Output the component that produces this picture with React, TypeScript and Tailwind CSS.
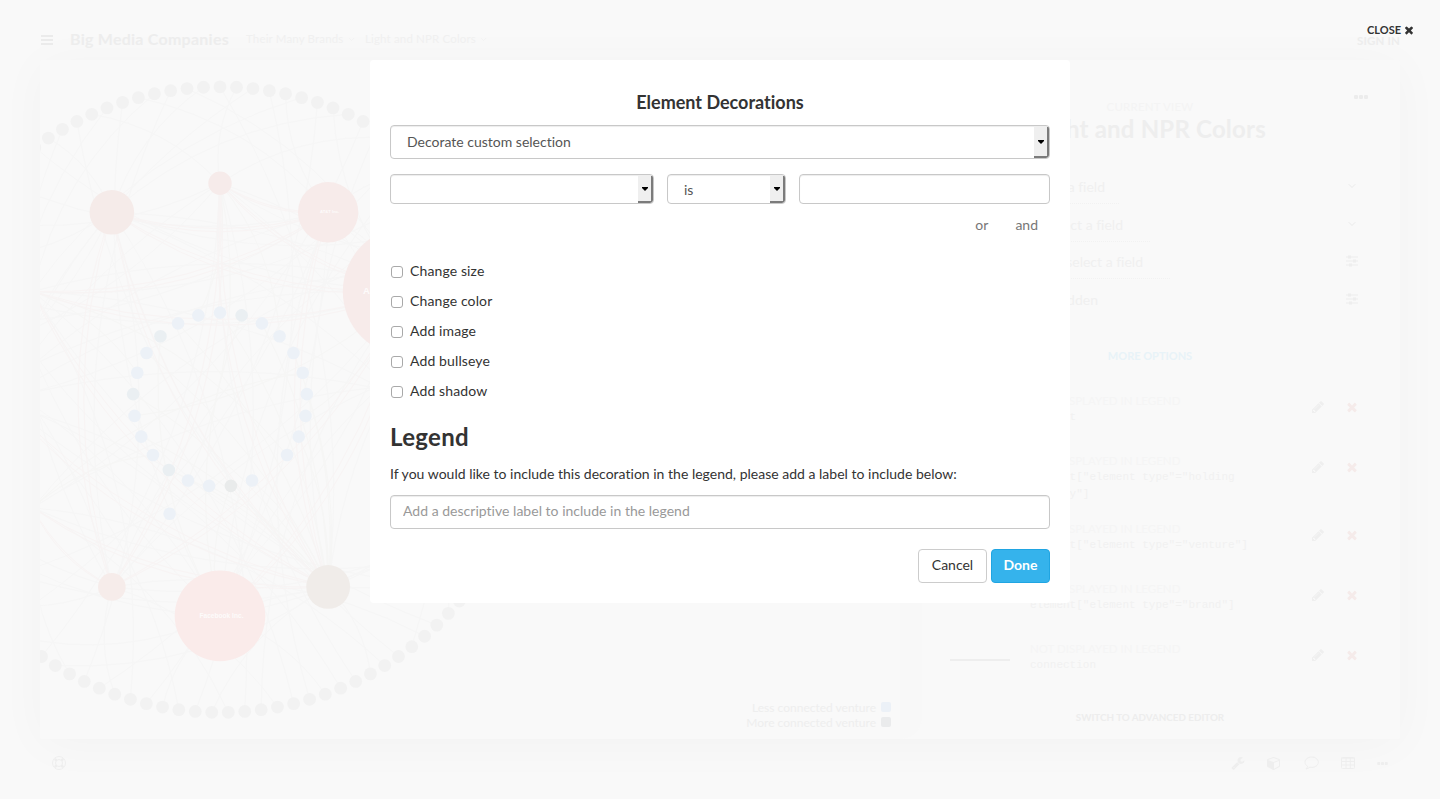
import React from "react";
import { ChevronDown } from "lucide-react";

const CX = 180;
const CY = 339.6;

type Point = { x: number; y: number };

function onRing(radius: number, index: number, count: number): Point {
  const a = (index / count) * Math.PI * 2;
  return { x: CX + radius * Math.sin(a), y: CY - radius * Math.cos(a) };
}

const outerDots = Array.from({ length: 119 }, (_, i) => onRing(312.8, i, 119));
const innerDots = Array.from({ length: 25 }, (_, i) => ({ ...onRing(87, i, 25), i })).filter((d) => d.i !== 10);

const hubs = [
  { k: 0, r: 11.7, fill: "#f6ebea" },
  { k: 1, r: 30.2, fill: "#f7ebea" },
  { k: 2, r: 64.5, fill: "#f7ebea" },
  { k: 5, r: 21.9, fill: "#f0ece9" },
  { k: 6, r: 45.3, fill: "#faebea" },
  { k: 7, r: 13.8, fill: "#f6ecea" },
  { k: 8, r: 7, fill: "#f7ebea" },
  { k: 9, r: 7, fill: "#f7ebea" },
  { k: 10, r: 7, fill: "#f7ebea" },
  { k: 11, r: 22.3, fill: "#f5ebe9" },
].map((h) => ({ ...h, ...onRing(216.3, h.k, 12) }));

function curve(a: Point, b: Point, bend: number) {
  const mx = (a.x + b.x) / 2 - (b.y - a.y) * bend;
  const my = (a.y + b.y) / 2 + (b.x - a.x) * bend;
  return `M${a.x.toFixed(1)} ${a.y.toFixed(1)}Q${mx.toFixed(1)} ${my.toFixed(1)} ${b.x.toFixed(1)} ${b.y.toFixed(1)}`;
}

const grayLinks = outerDots.map((d, i) => curve(d, hubs[(i * 7 + 3) % hubs.length], i % 3 === 0 ? -0.17 : 0.17));
const innerLinks = innerDots.flatMap((d, i) =>
  i % 2 ? [curve(d, hubs[(i * 3 + 1) % hubs.length], 0.16)] : [curve(d, hubs[3], -0.12)],
);
const pinkLinks = [
  [9, 1], [9, 2], [9, 3], [9, 5], [0, 2], [0, 1], [0, 3], [8, 1], [8, 2], [8, 3],
  [6, 3], [6, 5], [5, 2], [5, 0], [7, 3], [4, 2], [1, 3],
].flatMap(([a, b]) => [curve(hubs[a], hubs[b], 0.15), curve(hubs[a], hubs[b], 0.18)]);

function innerFill(i: number) {
  if (i === 12) return "#e9ebeb";
  return [1, 15, 19, 22].includes(i) ? "#eaeff2" : "#ecf1f7";
}

function Network() {
  return (
    <svg className="block h-[680px] w-[860px]" viewBox="0 0 860 680">
      <g fill="none" strokeWidth="1">
        {grayLinks.map((d, i) => <path key={i} d={d} stroke="#f6f6f6" />)}
        {innerLinks.map((d, i) => <path key={i} d={d} stroke="#f6f6f5" />)}
        {pinkLinks.map((d, i) => <path key={i} d={d} stroke="#f8f4f4" />)}
      </g>
      {outerDots.map((d, i) => <circle key={i} cx={d.x} cy={d.y} r="6.4" fill="#f2f2f2" />)}
      {innerDots.map((d) => <circle key={d.i} cx={d.x} cy={d.y} r="6.3" fill={innerFill(d.i)} />)}
      <circle cx="129.6" cy="453.7" r="6.3" fill="#ecf1f7" />
      {hubs.map((h) => <circle key={h.k} cx={h.x} cy={h.y} r={h.r} fill={h.fill} />)}
      <g fill="#fdfbfb" fontFamily="Liberation Sans, sans-serif" fontWeight="700">
        <text x="280" y="153" fontSize="4.2">AT&amp;T Inc.</text>
        <text x="159.5" y="558" fontSize="6.6">Facebook Inc.</text>
        <text x="323" y="234" fontSize="9.5">Al</text>
      </g>
    </svg>
  );
}

function Glyph({ d, className }: { d: string; className: string }) {
  return (
    <svg viewBox="0 0 1792 1792" fill="currentColor" className={className}>
      <path d={d} />
    </svg>
  );
}

const TIMES = "M1490 1322q0 40-28 68l-136 136q-28 28-68 28t-68-28l-294-294-294 294q-28 28-68 28t-68-28l-136-136q-28-28-28-68t28-68l294-294-294-294q-28-28-28-68t28-68l136-136q28-28 68-28t68 28l294 294 294-294q28-28 68-28t68 28l136 136q28 28 28 68t-28 68l-294 294 294 294q28 28 28 68z";
const PENCIL = "M491 1536l91-91-235-235-91 91v107h128v128h107zm523-928q0-22-22-22-10 0-17 7l-542 542q-7 7-7 17 0 22 22 22 10 0 17-7l542-542q7-7 7-17zm-54-192l416 416-832 832h-416v-416zm683 96q0 53-37 90l-166 166-416-416 166-165q36-38 90-38 53 0 91 38l235 234q37 39 37 91z";
const WRENCH = "M448 1472q0-26-19-45t-45-19-45 19-19 45 19 45 45 19 45-19 19-45zm644-420l-682 682q-37 37-90 37-52 0-91-37l-106-108q-38-36-38-90 0-53 38-91l681-681q39 98 114.5 173.5t173.5 114.5zm634-435q0 39-23 106-47 134-164.5 217.5t-258.5 83.5q-185 0-316.5-131.5t-131.5-316.5 131.5-316.5 316.5-131.5q58 0 121.5 16.5t107.5 46.5q16 11 16 28t-16 28l-293 169v224l193 107q5-3 79-48.5t135.5-81 70.5-35.5q15 0 23.5 10t8.5 25z";
const CUBE = "M896 1629l640-349v-636l-640 233v752zm-64-865l698-254-698-254-698 254zm832-252v768q0 35-18 65t-49 47l-704 384q-28 16-61 16t-61-16l-704-384q-31-17-49-47t-18-65v-768q0-40 23-73t61-47l704-256q22-8 44-8t44 8l704 256q38 14 61 47t23 73z";

function Dots({ className }: { className: string }) {
  return (
    <svg viewBox="0 0 14 4" fill="currentColor" className={className}>
      <rect width="4" height="4" rx="1" />
      <rect x="5" width="4" height="4" rx="1" />
      <rect x="10" width="4" height="4" rx="1" />
    </svg>
  );
}

function Sliders() {
  return (
    <svg viewBox="0 0 12 12" className="h-3 w-3" fill="#eeeeee">
      <path d="M0 1.5h12v1H0zM0 5.5h12v1H0zM0 9.5h12v1H0zM2 .5h3v3H2zM7 4.5h3v3H7zM3 8.5h3v3H3z" />
    </svg>
  );
}

function LifeRing() {
  return (
    <svg viewBox="0 0 14 14" className="h-[14px] w-[14px]" fill="none" stroke="currentColor">
      <circle cx="7" cy="7" r="6.5" />
      <circle cx="7" cy="7" r="3.5" />
      <path d="M2.8 2.8l1.6 1.6M9.6 9.6l1.6 1.6M11.2 2.8L9.6 4.4M4.4 9.6l-1.6 1.6" strokeWidth="2.6" />
    </svg>
  );
}

function Bubble() {
  return (
    <svg viewBox="0 0 15 14" className="ml-[23px] h-[14px] w-[15px]" fill="none" stroke="currentColor">
      <path d="M7.7 1C4 1 1 3.300 1 6.200c0 1.700 1 3.200 2.600 4.100-.2 1-.8 1.900-1.600 2.700 1.700-.3 2.900-1 3.800-1.800.6.1 1.200.2 1.900.2 3.700 0 6.600-2.300 6.600-5.200S11.400 1 7.700 1z" />
    </svg>
  );
}

function TableIcon() {
  return (
    <svg viewBox="0 0 14 12" className="ml-[22px] h-3 w-[14px]" fill="none" stroke="currentColor">
      <rect x=".5" y=".5" width="13" height="11" rx="1" />
      <path d="M0 1.200h14M0 4.500h14M0 8h14M5 1v11M9.300 1v11" />
    </svg>
  );
}

function FieldRow({ text, end, line, icon }: { text: string; end: string; line: string; icon: React.ReactNode }) {
  return (
    <div className="flex h-[37.5px] items-start justify-between">
      <div className={`flex h-[28px] justify-end ${line}`}>
        <span className={`pt-[2px] text-[14px] leading-[18px] text-[#f0f0f0] ${end}`}>{text}</span>
      </div>
      <div className="mr-[42px] flex h-5 w-3 items-center justify-center text-[#ebebeb]">{icon}</div>
    </div>
  );
}

function RuleRow({ height, swatch, lines }: { height: string; swatch?: React.ReactNode; lines: string[] }) {
  return (
    <div className={`flex items-start ${height}`}>
      <div className="ml-[28px] flex h-[26px] w-[80px] items-center">{swatch}</div>
      <div className="flex-1">
        <p className="mb-px text-[11.5px] leading-[15px] text-[#f5f5f5]">NOT DISPLAYED IN LEGEND</p>
        {lines.map((l) => (
          <p key={l} className="font-[Liberation_Mono,monospace] text-[11px] leading-[17px] text-[#f1f1f1]">{l}</p>
        ))}
      </div>
      <Glyph d={PENCIL} className="mt-[7px] mr-[20px] h-[14px] w-[14px] text-[#efefef]" />
      <Glyph d={TIMES} className="mt-[7px] mr-[41px] h-[14px] w-[14px] text-[#f5ebea]" />
    </div>
  );
}

function SelectBox({ className, textClass, value }: { className: string; textClass: string; value: string }) {
  return (
    <div className={`flex overflow-hidden rounded-[4px] border border-[#c8c8c8] bg-white shadow-[inset_0_1px_1px_rgba(0,0,0,0.075)] ${className}`}>
      <span className={`flex-1 text-[14px] text-[#555555] ${textClass}`}>{value}</span>
      <span className="mt-px flex w-[15px] items-center justify-center rounded-br-[3px] border-r-2 border-b-2 border-[#7b7b7b] bg-[#efefef] pl-px">
        <svg viewBox="0 0 6 4" className="h-1 w-[6px] shrink-0"><path d="M0 0h6v1L3 4 0 1z" fill="#000" /></svg>
      </span>
    </div>
  );
}

const options = ["Change size", "Change color", "Add image", "Add bullseye", "Add shadow"];

function Modal() {
  return (
    <div className="flex h-[543px] w-[700px] flex-col rounded-[4px] bg-white px-5 text-[14px] text-[#333333]">
      <h4 className="mt-8 text-center text-[18px] leading-5 font-bold">Element Decorations</h4>
      <SelectBox className="mt-[13px] h-[34px]" textClass="pl-4 leading-[31px]" value="Decorate custom selection" />
      <div className="mt-[15px] flex h-[30px]">
        <SelectBox className="w-[264px]" textClass="" value="" />
        <SelectBox className="ml-[13px] w-[119px]" textClass="pl-4 leading-[30px]" value="is" />
        <input className="ml-[13px] w-[251px] rounded-[4px] border border-[#c8c8c8] shadow-[inset_0_1px_1px_rgba(0,0,0,0.075)]" />
      </div>
      <div className="mt-[11px] flex h-5 justify-end gap-[27px] pr-3 leading-5 text-[#777777]">
        <span>or</span>
        <span>and</span>
      </div>
      <div className="mt-[26px] flex flex-col gap-[10px] tracking-[0.12px]">
        {options.map((o) => (
          <label key={o} className="flex h-5 items-center pl-px leading-5">
            <input type="checkbox" className="mt-[1px] mr-[7px] h-3 w-3 appearance-none rounded-[3px] border border-[#a9a9a9] bg-white" />
            {o}
          </label>
        ))}
      </div>
      <h3 className="mt-[23px] text-[24px] leading-[26px] font-bold tracking-[0.3px]">Legend</h3>
      <p className="mt-[14px] leading-5 tracking-[0.01px]">If you would like to include this decoration in the legend, please add a label to include below:</p>
      <input
        className="mt-[11px] h-[34px] shrink-0 rounded-[4px] border border-[#c8c8c8] px-3 pb-[3px] tracking-[0.02px] shadow-[inset_0_1px_1px_rgba(0,0,0,0.075)] placeholder:text-[#999999]"
        placeholder="Add a descriptive label to include in the legend"
      />
      <div className="mt-5 flex h-[34px] justify-end gap-1">
        <button className="w-[69px] rounded-[4px] border border-[#cccccc] bg-white pb-[3px]">Cancel</button>
        <button className="w-[59px] rounded-[4px] border border-[#20a5e2] bg-[#35b3ec] pb-[3px] font-bold text-white">Done</button>
      </div>
    </div>
  );
}

export default function App() {
  return (
    <div className="relative h-[799px] w-[1440px] overflow-hidden bg-[#f9f9f9] font-[Lato,sans-serif] [font-variant-ligatures:none]">
      <div className="flex h-full flex-col px-10">
        <header className="relative z-10 flex h-[60px] items-center pt-[18px] text-[#f0f0f0]">
          <svg viewBox="0 0 12 10" className="mt-px ml-px h-[10px] w-3" fill="#ebebeb">
            <path d="M0 0h12v2H0zM0 4h12v2H0zM0 8h12v2H0z" />
          </svg>
          <b className="mb-px ml-[17px] w-[176px] text-[16px] tracking-[0.25px] text-[#ededed]">Big Media Companies</b>
          <span className="w-[101px] text-[11.5px] tracking-[0.15px]">Their Many Brands</span>
          <ChevronDown size={9} />
          <span className="ml-[9px] w-[114px] text-[11.5px] tracking-[0.15px]">Light and NPR Colors</span>
          <ChevronDown size={9} />
          <b className="mt-[4px] ml-auto text-[11.5px] tracking-[0.15px] text-[#ededed]">SIGN IN</b>
        </header>

        <main className="flex h-[679px] shrink-0 rounded-[2px] bg-[#f9f9f9] shadow-[0_5px_50px_rgba(0,0,0,0.03)]">
          <section className="relative w-[860px] overflow-hidden">
            <Network />
            <div className="absolute right-[9px] bottom-[9px] flex flex-col items-end text-[12px] leading-[15px] text-[#eeeeee]">
              <span className="flex items-center gap-[5px]">Less connected venture<i className="mb-px h-[10px] w-[10px] rounded-[2px] bg-[#ecf1f7]" /></span>
              <span className="flex items-center gap-[5px]">More connected venture<i className="mb-px h-[10px] w-[10px] rounded-[2px] bg-[#eaebec]" /></span>
            </div>
          </section>
          <aside className="flex w-[500px]">
            <div className="w-[22px] rounded-br-[22px] bg-[#f8f8f8]" />
            <div className="flex flex-1 flex-col">
              <div className="mt-[35px] mr-[32px] flex h-1 justify-end text-[#ececec]"><Dots className="h-1 w-[14px]" /></div>
              <div className="mr-[22px] text-center">
                <p className="text-[11.5px] leading-4 tracking-[0.2px] text-[#f4f4f4]">CURRENT VIEW</p>
                <h2 className="text-[24px] leading-7 font-bold tracking-[0.2px] text-[#eeeeee]">Light and NPR Colors</h2>
              </div>
              <div className="mt-[33px]">
                <FieldRow text="select a field" end="mr-[14px]" line="w-[197px] border-b border-dotted border-[#f2f2f2]" icon={<ChevronDown size={12} />} />
                <FieldRow text="select a field" end="mr-[27px]" line="w-[228px] border-b border-dotted border-[#f2f2f2]" icon={<ChevronDown size={12} />} />
                <FieldRow text="select a field" end="mr-[27px]" line="w-[248px] border-b border-dotted border-[#f2f2f2]" icon={<Sliders />} />
                <FieldRow text="hidden" end="" line="w-[176px]" icon={<Sliders />} />
              </div>
              <b className="mt-[22px] mr-[22px] text-center text-[11px] leading-4 text-[#e8f3f8]">MORE OPTIONS</b>
              <div className="mt-[29px]">
                <RuleRow height="h-[60px]" lines={["element"]} />
                <RuleRow height="h-[68px]" lines={['element["element type"="holding', 'company"]']} />
                <RuleRow height="h-[60px]" lines={['element["element type"="venture"]']} />
                <RuleRow height="h-[60px]" lines={['element["element type"="brand"]']} swatch={<i className="mt-[-6px] ml-[24px] h-[13px] w-[13px] rounded-full bg-[#eeeeee]" />} />
                <RuleRow height="h-[60px]" lines={["connection"]} swatch={<i className="mt-[12px] h-[2px] w-[60px] bg-[#eeeeee]" />} />
              </div>
              <b className="mt-[8px] mr-[22px] text-center text-[9.8px] leading-4 text-[#ededed]">SWITCH TO ADVANCED EDITOR</b>
            </div>
          </aside>
        </main>

        <footer className="relative z-10 flex h-[48px] items-center pr-3 pl-3 text-[#eeeeee]">
          <LifeRing />
          <Glyph d={WRENCH} className="ml-auto h-[14px] w-[14px]" />
          <Glyph d={CUBE} className="ml-[22px] h-[14px] w-[14px]" />
          <Bubble />
          <TableIcon />
          <Dots className="ml-[22px] h-[3px] w-[11px]" />
        </footer>
      </div>

      <div className="absolute inset-0 z-20 flex justify-center pt-[60px]">
        <Modal />
        <button className="absolute top-[22px] right-[25px] flex h-4 items-center gap-[2px] text-[11px] font-bold text-[#333333]">
          CLOSE
          <Glyph d={TIMES} className="h-[12px] w-[12px]" />
        </button>
      </div>
    </div>
  );
}
